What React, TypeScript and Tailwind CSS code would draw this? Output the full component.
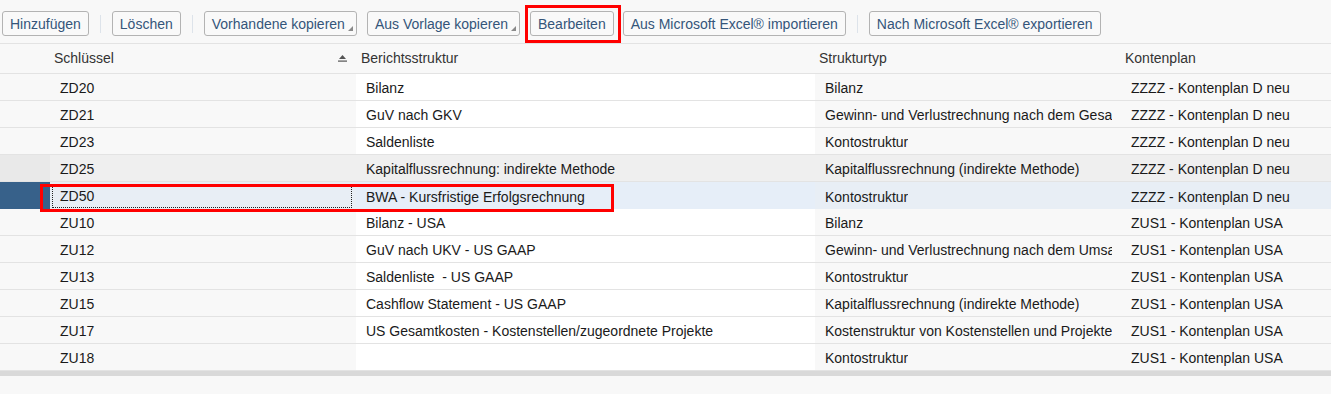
import React from "react";

type Row = { key: string; ber: string; typ: string; plan: string };

const rows: Row[] = [
  { key: "ZD20", ber: "Bilanz", typ: "Bilanz", plan: "ZZZZ - Kontenplan D neu" },
  { key: "ZD21", ber: "GuV nach GKV", typ: "Gewinn- und Verlustrechnung nach dem Gesamtkostenverfahren", plan: "ZZZZ - Kontenplan D neu" },
  { key: "ZD23", ber: "Saldenliste", typ: "Kontostruktur", plan: "ZZZZ - Kontenplan D neu" },
  { key: "ZD25", ber: "Kapitalflussrechnung: indirekte Methode", typ: "Kapitalflussrechnung (indirekte Methode)", plan: "ZZZZ - Kontenplan D neu" },
  { key: "ZD50", ber: "BWA - Kursfristige Erfolgsrechnung", typ: "Kontostruktur", plan: "ZZZZ - Kontenplan D neu" },
  { key: "ZU10", ber: "Bilanz - USA", typ: "Bilanz", plan: "ZUS1 - Kontenplan USA" },
  { key: "ZU12", ber: "GuV nach UKV - US GAAP", typ: "Gewinn- und Verlustrechnung nach dem Umsatzkostenverfahren", plan: "ZUS1 - Kontenplan USA" },
  { key: "ZU13", ber: "Saldenliste  - US GAAP", typ: "Kontostruktur", plan: "ZUS1 - Kontenplan USA" },
  { key: "ZU15", ber: "Cashflow Statement - US GAAP", typ: "Kapitalflussrechnung (indirekte Methode)", plan: "ZUS1 - Kontenplan USA" },
  { key: "ZU17", ber: "US Gesamtkosten - Kostenstellen/zugeordnete Projekte", typ: "Kostenstruktur von Kostenstellen und Projekten", plan: "ZUS1 - Kontenplan USA" },
  { key: "ZU18", ber: "", typ: "Kontostruktur", plan: "ZUS1 - Kontenplan USA" },
];

function Btn({ label, drop = false }: { label: string; drop?: boolean }) {
  return (
    <button
      className={`relative h-[25px] pt-px pl-[7px] ${drop ? "pr-[11px]" : "pr-[7px]"} border border-[#b3b3b3] rounded-[3px] bg-[#f9f9f9] text-[14px] leading-none text-[#34557a] whitespace-nowrap`}
    >
      {label}
      {drop && (
        <svg className="absolute right-[3px] bottom-[4px]" width="5" height="5" viewBox="0 0 5 5">
          <path d="M5 0 L5 5 L0 5 Z" fill="#8a8a8a" />
        </svg>
      )}
    </button>
  );
}

function Sep() {
  return <div className="w-px h-[18px] bg-[#dde3ea] mx-[11px]" />;
}

export default function App() {
  return (
    <div
      className="relative w-[1331px] h-[394px] bg-[#f8f8f8] overflow-hidden"
      style={{ fontFamily: '"Liberation Sans", Arial, sans-serif' }}
    >
      {/* toolbar */}
      <div className="h-[44px] pt-[11px] pl-[2px] flex items-start border-b border-[#e3e3e3]">
        <Btn label="Hinzufügen" />
        <div className="h-[25px] flex items-center"><Sep /></div>
        <Btn label="Löschen" />
        <div className="h-[25px] flex items-center"><Sep /></div>
        <div className="flex gap-[10px]">
          <Btn label="Vorhandene kopieren" drop />
          <Btn label="Aus Vorlage kopieren" drop />
          <Btn label="Bearbeiten" />
        </div>
        <div className="ml-[9px]">
          <Btn label="Aus Microsoft Excel® importieren" />
        </div>
        <div className="h-[25px] flex items-center"><Sep /></div>
        <Btn label="Nach Microsoft Excel® exportieren" />
      </div>

      {/* header */}
      <div className="grid grid-cols-[50px_306px_459px_305px_1fr] h-[30px] border-b border-[#e3e3e3] text-[14px] text-[#333]">
        <div />
        <div className="flex items-center justify-between pl-[4px] pr-[9px]">
          <span>Schlüssel</span>
          <svg width="9" height="8" viewBox="0 0 9 8">
            <path d="M4.5 0 L8 4 L1 4 Z" fill="#555" />
            <rect x="0" y="5.5" width="9" height="1.2" fill="#555" />
          </svg>
        </div>
        <div className="flex items-center pl-[5px]">Berichtsstruktur</div>
        <div className="flex items-center pl-[4px]">Strukturtyp</div>
        <div className="flex items-center pl-[5px]">Kontenplan</div>
      </div>

      {/* rows */}
      <div className="text-[14px] text-[#1a1a1a]">
        {rows.map((r) => {
          const sel = r.key === "ZD50";
          const hov = r.key === "ZD25";
          const base = sel ? "bg-[#e8eef5]" : hov ? "bg-[#efefef]" : "bg-[#f8f8f8]";
          const white = sel ? "bg-[#e6eef8]" : hov ? "bg-[#efefef]" : "bg-white";
          const left = sel ? "bg-[#37618a]" : hov ? "bg-[#e9e9e9]" : "bg-[#f8f8f8]";
          return (
            <div
              key={r.key}
              className="grid grid-cols-[50px_306px_459px_305px_1fr] h-[27px] border-b border-[#e3e3e3]"
            >
              <div className={left} />
              {sel ? (
                <div className={`${base} flex pl-[2px] pr-[4px] py-[2px]`}>
                  <div className="w-full h-full border border-dotted border-[#222] flex items-center pt-px pl-[7px]">
                    {r.key}
                  </div>
                </div>
              ) : (
                <div className={`${base} flex items-center pt-[2px] pl-[10px] whitespace-nowrap overflow-hidden`}>
                  {r.key}
                </div>
              )}
              <div className={`${white} flex items-center pt-[2px] pl-[10px] whitespace-pre overflow-hidden`}>{r.ber}</div>
              <div className={`${base} flex items-center pt-[2px] pl-[10px] pr-[8px] min-w-0`}>
                <span className="block min-w-0 whitespace-nowrap overflow-hidden">{r.typ}</span>
              </div>
              <div className={`${base} flex items-center pt-[2px] pl-[11px] whitespace-nowrap overflow-hidden`}>{r.plan}</div>
            </div>
          );
        })}
      </div>
      <div className="h-[5px] bg-[#d9d9d9]" />

      {/* annotations */}
      <div className="absolute left-[525px] top-[5px] w-[96px] h-[38px] border-[3px] border-[#ff0000]" />
      <div className="absolute left-[40px] top-[184px] w-[574px] h-[28px] border-[3px] border-[#ff0000]" />
    </div>
  );
}
